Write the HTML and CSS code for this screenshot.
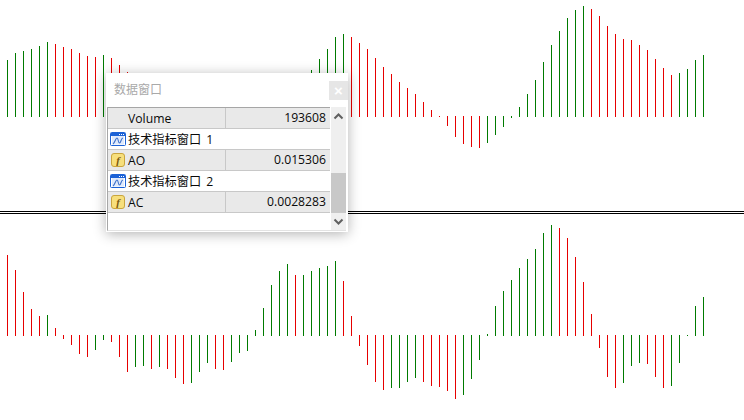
FILE: index.html
```html
<!DOCTYPE html>
<html lang="zh">
<head>
<meta charset="utf-8">
<title>数据窗口</title>
<link rel="stylesheet" href="styles.css">
</head>
<body>
<div class="chart">
  <svg class="pane pane-top" width="744" height="211" viewBox="0 0 744 211">
    <path class="up" d="M7.5 60V117M15.5 53V117M23.5 51V117M31.5 49V117M39.5 46V117M47.5 42V117M103.5 55V117M311.5 70V117M319.5 59V117M327.5 49V117M335.5 37V117M343.5 34V117M487.5 116V143M495.5 116V135M503.5 116V127M511.5 116V118M519.5 107V117M527.5 94V117M535.5 80V117M543.5 62V117M551.5 45V117M559.5 31V117M567.5 18V117M575.5 10V117M583.5 6V117M679.5 73V117M687.5 69V117M695.5 60V117M703.5 55V117"/>
    <path class="down" d="M55.5 44V117M63.5 47V117M71.5 49V117M79.5 53V117M87.5 56V117M95.5 57V117M111.5 58V117M119.5 65V117M127.5 72V117M351.5 37V117M359.5 43V117M367.5 49V117M375.5 58V117M383.5 67V117M391.5 74V117M399.5 82V117M407.5 88V117M415.5 94V117M423.5 102V117M431.5 110V117M439.5 116V117M447.5 116V126M455.5 116V137M463.5 116V144M471.5 116V147M479.5 116V148M591.5 9V117M599.5 16V117M607.5 26V117M615.5 34V117M623.5 39V117M631.5 40V117M639.5 45V117M647.5 50V117M655.5 59V117M663.5 68V117M671.5 75V117"/>
  </svg>
  <div class="divider"></div>
  <svg class="pane pane-bottom" width="744" height="206" viewBox="0 214 744 206">
    <path class="up" d="M47.5 315V336M95.5 335V350M103.5 335V340M135.5 335V367M143.5 335V366M159.5 335V367M191.5 335V383M199.5 335V372M207.5 335V363M231.5 335V362M239.5 335V353M247.5 335V351M255.5 330V336M263.5 308V336M271.5 285V336M279.5 271V336M287.5 264V336M303.5 275V336M311.5 271V336M319.5 268V336M327.5 266V336M335.5 261V336M391.5 335V388M399.5 335V388M407.5 335V382M415.5 335V378M463.5 335V395M471.5 335V379M479.5 335V360M487.5 334V336M495.5 306V336M503.5 291V336M511.5 280V336M519.5 268V336M527.5 259V336M535.5 249V336M543.5 233V336M551.5 225V336M623.5 335V383M631.5 335V366M639.5 335V363M671.5 335V386M679.5 335V363M687.5 335V336M695.5 306V336M703.5 297V336"/>
    <path class="down" d="M7.5 255V336M15.5 270V336M23.5 292V336M31.5 309V336M39.5 316V336M55.5 328V336M63.5 335V339M71.5 335V345M79.5 335V354M87.5 335V357M111.5 335V342M119.5 335V357M127.5 335V372M151.5 335V369M167.5 335V369M175.5 335V378M183.5 335V384M215.5 335V369M223.5 335V370M295.5 275V336M343.5 281V336M351.5 316V336M359.5 335V346M367.5 335V365M375.5 335V382M383.5 335V390M423.5 335V382M431.5 335V386M439.5 335V387M447.5 335V391M455.5 335V399M559.5 228V336M567.5 238V336M575.5 257V336M583.5 282V336M591.5 314V336M599.5 335V348M607.5 335V377M615.5 335V388M647.5 335V364M655.5 335V377M663.5 335V388"/>
  </svg>
</div>

<section class="data-window">
  <header class="title-bar">
    <span class="title">数据窗口</span>
    <button class="close" type="button">×</button>
  </header>
  <div class="body">
    <div class="table">
      <div class="row metric"><span class="name indent">Volume</span><span class="value">193608</span></div>
      <div class="row group">
        <svg class="icon" width="16" height="16" viewBox="0 0 16 16"><rect class="win-frame" x="0.5" y="1.500" width="15" height="13" rx="1"/><rect class="win-head" x="1" y="2" width="14" height="3"/><path class="win-dots" d="M9 3.500h1M11 3.500h1M13 3.500h1"/><rect class="win-pane" x="2" y="5" width="12" height="8.500"/><path class="win-wave" d="M3 13C5 12 5.500 7 7 7S8 12 9.500 12 11 7 13 7"/></svg>
        <span class="name">技术指标窗口 1</span>
      </div>
      <div class="row metric">
        <svg class="icon" width="16" height="16" viewBox="0 0 16 16"><rect class="fn-box" x="1.500" y="1.500" width="13" height="13" rx="2.500"/><text class="fn-glyph" x="8" y="12">f</text></svg>
        <span class="name">AO</span><span class="value">0.015306</span>
      </div>
      <div class="row group">
        <svg class="icon" width="16" height="16" viewBox="0 0 16 16"><rect class="win-frame" x="0.5" y="1.500" width="15" height="13" rx="1"/><rect class="win-head" x="1" y="2" width="14" height="3"/><path class="win-dots" d="M9 3.500h1M11 3.500h1M13 3.500h1"/><rect class="win-pane" x="2" y="5" width="12" height="8.500"/><path class="win-wave" d="M3 13C5 12 5.500 7 7 7S8 12 9.500 12 11 7 13 7"/></svg>
        <span class="name">技术指标窗口 2</span>
      </div>
      <div class="row metric">
        <svg class="icon" width="16" height="16" viewBox="0 0 16 16"><rect class="fn-box" x="1.500" y="1.500" width="13" height="13" rx="2.500"/><text class="fn-glyph" x="8" y="12">f</text></svg>
        <span class="name">AC</span><span class="value">0.0028283</span>
      </div>
    </div>
    <div class="scrollbar">
      <svg class="arrow" width="15" height="21" viewBox="0 0 15 21"><path d="M3.500 11.500L7.500 7.500L11.500 11.500"/></svg>
      <div class="track"><div class="thumb"></div></div>
      <svg class="arrow" width="15" height="17" viewBox="0 0 15 17"><path d="M3.500 6.500L7.500 10.500L11.500 6.500"/></svg>
    </div>
  </div>
</section>
</body>
</html>
```
FILE: styles.css
```css
* { box-sizing: border-box; }
html, body { margin: 0; padding: 0; background: #fff; }
body { width: 744px; height: 420px; overflow: hidden; position: relative; font-family: "Open Sans", "Noto Sans CJK SC", sans-serif; }

.chart { display: flex; flex-direction: column; width: 744px; height: 420px; }
.pane { display: block; flex: none; }
.pane path { fill: none; stroke-width: 1; shape-rendering: crispEdges; }
.up { stroke: #007a00; }
.down { stroke: #e60000; }
.divider { flex: none; height: 3px; border-top: 1px solid #000; border-bottom: 1px solid #000; background: #fff; }

.data-window {
  position: absolute; left: 106px; top: 73px; width: 242px; height: 159px;
  background: #fff; display: flex; flex-direction: column;
  box-shadow: 0 2px 12px rgba(0, 0, 0, .3);
}
.title-bar { flex: none; height: 34px; display: flex; align-items: flex-start; justify-content: space-between; }
.title { margin: 8px 0 0 8px; font: 12px/16px "Noto Sans CJK SC", sans-serif; color: #a9a9a9; }
.close { margin: 8px 0 0; width: 19px; height: 19px; padding: 0; border: 0; background: #e6e6e6; color: #fff; font: bold 15px/18px "Liberation Sans", sans-serif; }

.body { flex: 1; margin: 0 2px 1px 1px; display: flex; border-left: 1px solid #a6a6a6; border-bottom: 1px solid #e3e3e3; }
.table { flex: none; width: 222px; border-top: 1px solid #a6a6a6; }
.row { height: 21px; display: flex; align-items: center; border-bottom: 1px solid #c8c8c8; font-size: 12.200px; color: #0a0a0a; }
.metric { background: #e9e9e9; }
.group { background: #fff; }
.icon { flex: none; display: block; margin: 0 2px; }
.name { flex: none; width: 97px; white-space: nowrap; }
.group .name { width: auto; word-spacing: 2px; }
.indent { margin-left: 20px; }
.value { flex: 1; align-self: stretch; line-height: 20px; text-align: right; padding-right: 4px; border-left: 1px solid #c8c8c8; }

.win-frame { fill: #fff; stroke: #1c62d6; }
.win-head { fill: #1c62d6; }
.win-dots { stroke: #fff; fill: none; }
.win-pane { fill: #dfe9fb; }
.win-wave { fill: none; stroke: #3b6fc9; stroke-width: 1.100; }
.fn-box { fill: #f7df7c; stroke: #c9a53e; }
.fn-glyph { font: italic bold 11px "Liberation Serif", serif; fill: #7a5a10; text-anchor: middle; }

.scrollbar { flex: none; width: 15px; margin-left: 1px; background: #efefef; display: flex; flex-direction: column; }
.arrow { flex: none; display: block; }
.arrow path { fill: none; stroke: #606060; stroke-width: 2; }
.track { flex: 1; display: flex; flex-direction: column; justify-content: flex-end; }
.thumb { height: 40px; background: #c8c8c8; }
```
